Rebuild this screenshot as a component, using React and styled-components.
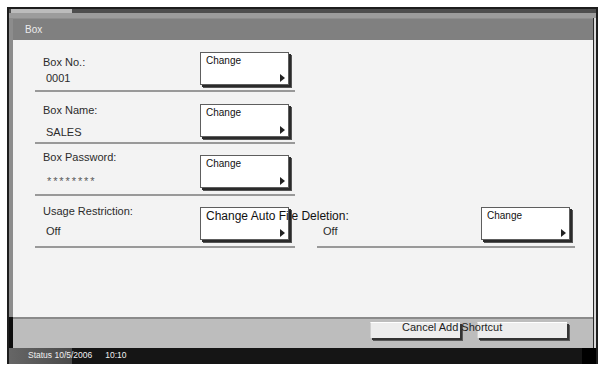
import React from "react";
import styled, { createGlobalStyle } from "styled-components";

const Global = createGlobalStyle`
  html, body { margin: 0; padding: 0; background: #ffffff; }
  body { font-family: "Liberation Sans", Arial, sans-serif; }
  * { box-sizing: border-box; }
`;

const Window = styled.div`
  margin: 7px 0 0 7px;
  width: 591px;
  height: 357px;
  border: 2px solid #1d1d1d;
  border-bottom: 0;
  display: flex;
  flex-direction: column;
  background: #1a1a1a;
`;

const TopStrip = styled.div`
  height: 9px;
  background: linear-gradient(#4e4e4e 0, #4e4e4e 4px, #9c9c9c 4px);
  display: flex;
`;

const Tab = styled.div`
  margin-left: 2px;
  width: 61px;
  height: 4px;
  background: #bcbcbc;
`;

const Body = styled.div`
  flex: 1;
  display: flex;
`;

const LeftGutter = styled.div`
  width: 4px;
  background: linear-gradient(#8c8c8c 0, #8c8c8c calc(100% - 31px), #0e0e0e calc(100% - 31px));
`;

const RightGutter = styled.div`
  width: 3px;
  background: linear-gradient(to right, #2a2a2a 0, #2a2a2a 1px, #d8d8d8 1px);
`;

const Panel = styled.div`
  flex: 1;
  display: flex;
  flex-direction: column;
`;

const TitleBar = styled.div`
  height: 22px;
  background: #808080;
  color: #ececec;
  font-size: 10px;
  line-height: 22px;
  padding-left: 12px;
  border-top: 1px solid #8e8e8e;
`;

const Content = styled.div`
  flex: 1;
  background: #f3f3f3;
  padding: 0 18px 0 22px;
  display: flex;
  flex-direction: column;
`;

const Row = styled.div`
  display: grid;
  grid-template-columns: 260px 258px;
  column-gap: 22px;
  height: 52px;
`;

const Field = styled.div`
  display: flex;
  align-items: flex-start;
  border-bottom: 2px solid #999999;
`;

const Info = styled.div`
  flex: 1;
  display: flex;
  flex-direction: column;
  padding-top: ${(p) => p.$top}px;
  padding-left: ${(p) => p.$indent}px;
`;

const Label = styled.div`
  font-size: 11px;
  line-height: 13px;
  height: 13px;
  color: #2b2b2b;
  white-space: nowrap;
`;

const Value = styled.div`
  font-size: 11px;
  line-height: 13px;
  color: #2b2b2b;
  margin-top: ${(p) => p.$gap}px;
  padding-left: 3px;
  ${(p) =>
    p.$masked
      ? "color: #5a5a5a; letter-spacing: 1.9px; padding-top: 3px; padding-left: 4px;"
      : ""}
`;

const ChangeButton = styled.button`
  margin-top: ${(p) => p.$top}px;
  margin-right: ${(p) => p.$right}px;
  width: 89px;
  height: 33px;
  padding: 2px 3px 2px 5px;
  background: #ffffff;
  border: 1px solid #5e5e5e;
  border-radius: 0;
  box-shadow: 2px 2px 0 #2a2a2a, 3px 3px 0 #555555;
  display: flex;
  flex-direction: column;
  justify-content: space-between;
  align-items: flex-start;
  font-family: "Liberation Sans", Arial, sans-serif;
  font-size: ${(p) => (p.$wide ? 12 : 10)}px;
  line-height: 12px;
  color: #111111;
  text-align: left;
  white-space: nowrap;
  overflow: visible;
  position: relative;
  z-index: 1;
`;

const Arrow = styled.svg`
  align-self: flex-end;
  display: block;
`;

const BottomBar = styled.div`
  height: 31px;
  border-top: 2px solid #8a8a8a;
  background: #bdbdbd;
  display: flex;
  justify-content: flex-end;
  padding: 3px 26px 0 0;
`;

const ButtonGroup = styled.div`
  position: relative;
  display: flex;
  gap: 17px;
  align-items: flex-start;
`;

const ActionButton = styled.button`
  width: 90px;
  height: 16px;
  padding: 0;
  background: #ededed;
  border: 0;
  border-top: 1px solid #ffffff;
  border-left: 1px solid #cfcfcf;
  border-radius: 0;
  box-shadow: 2px 2px 0 #333333, 3px 3px 0 #5a5a5a;
`;

const GroupLabel = styled.span`
  position: absolute;
  left: 32px;
  top: -1px;
  font-size: 11px;
  line-height: 13px;
  color: #1e1e1e;
  white-space: nowrap;
  pointer-events: none;
`;

const StatusBar = styled.div`
  height: 16px;
  background: linear-gradient(
    to right,
    #666666 0,
    #4a4a4a 63px,
    #151515 63px,
    #151515 573px,
    #000000 573px
  );
  display: flex;
  align-items: center;
  padding: 0 0 2px 19px;
  color: #f0f0f0;
  font-size: 8.5px;
  gap: 13px;
  white-space: nowrap;
`;

const TriangleIcon = () => (
  <Arrow width="5" height="8" viewBox="0 0 5 8">
    <path d="M0 0 L5 4 L0 8 Z" fill="#222" />
  </Arrow>
);

const rows = [
  { label: "Box No.:", value: "0001", top: 16, gap: 3, btn: 12 },
  { label: "Box Name:", value: "SALES", top: 12, gap: 9, btn: 12 },
  { label: "Box Password:", value: "********", top: 7, gap: 8, btn: 11, masked: true },
];

export default function App() {
  return (
    <>
      <Global />
      <Window>
        <TopStrip>
          <Tab />
        </TopStrip>
        <Body>
          <LeftGutter />
          <Panel>
            <TitleBar>Box</TitleBar>
            <Content>
              {rows.map((r) => (
                <Row key={r.label}>
                  <Field>
                    <Info $top={r.top} $indent={8}>
                      <Label>{r.label}</Label>
                      <Value $gap={r.gap} $masked={r.masked}>{r.value}</Value>
                    </Info>
                    <ChangeButton $top={r.btn} $right={6}>
                      Change
                      <TriangleIcon />
                    </ChangeButton>
                  </Field>
                </Row>
              ))}
              <Row>
                <Field>
                  <Info $top={9} $indent={8}>
                    <Label>Usage Restriction:</Label>
                    <Value $gap={7}>Off</Value>
                  </Info>
                  <ChangeButton $top={11} $right={6} $wide>
                    Change Auto File Deletion:
                    <TriangleIcon />
                  </ChangeButton>
                </Field>
                <Field>
                  <Info $top={9} $indent={3}>
                    <Label />
                    <Value $gap={7}>Off</Value>
                  </Info>
                  <ChangeButton $top={11} $right={5}>
                    Change
                    <TriangleIcon />
                  </ChangeButton>
                </Field>
              </Row>
            </Content>
            <BottomBar>
              <ButtonGroup>
                <ActionButton aria-label="Cancel" />
                <ActionButton aria-label="Add Shortcut" />
                <GroupLabel>Cancel Add Shortcut</GroupLabel>
              </ButtonGroup>
            </BottomBar>
          </Panel>
          <RightGutter />
        </Body>
        <StatusBar>
          <span>Status 10/5/2006</span>
          <span>10:10</span>
        </StatusBar>
      </Window>
    </>
  );
}
